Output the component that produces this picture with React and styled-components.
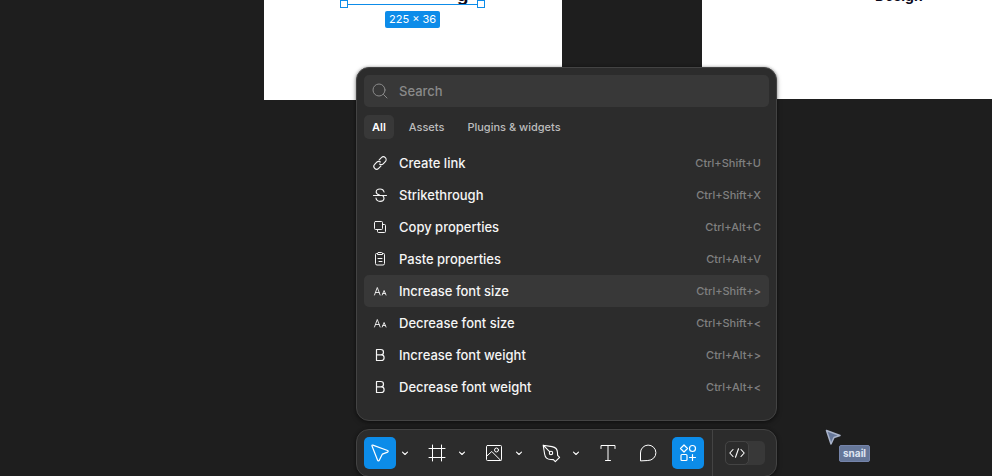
import React from "react";
import styled, { createGlobalStyle, css } from "styled-components";

const Global = createGlobalStyle`
  *, *::before, *::after { box-sizing: border-box; }
  body { margin: 0; background: #1e1e1e; overflow: hidden; }
  button, input { font: inherit; color: inherit; }
`;

const Page = styled.main`
  position: relative;
  height: 100vh;
  overflow: hidden;
  background: #1e1e1e;
  font-family: Inter, "Liberation Sans", sans-serif;
  color: #fff;
`;

const Frame = styled.section`
  position: absolute;
  top: ${(p) => p.$y}px;
  left: ${(p) => p.$x}px;
  width: ${(p) => p.$w}px;
  height: ${(p) => p.$h}px;
  background: #fff;
  color: #0b0a1c;
`;

const FrameText = styled.span`
  position: absolute;
  left: ${(p) => p.$x}px;
  top: ${(p) => p.$y}px;
  font-size: ${(p) => p.$size}px;
  line-height: 20px;
  font-weight: 700;
`;

const Selection = styled.div`
  position: absolute;
  left: 79px;
  top: -17px;
  width: 139px;
  height: 22px;
  border: 1px solid #0d8ce9;
`;

const Handle = styled.i`
  position: absolute;
  bottom: -4px;
  ${(p) => p.$side}: -4px;
  width: 8px;
  height: 8px;
  background: #fff;
  border: 1px solid #0d8ce9;
`;

const SizeTag = styled.span`
  position: absolute;
  left: 121px;
  top: 11px;
  padding: 0 4px;
  border-radius: 2px;
  background: #0d8ce9;
  color: #fff;
  font-size: 11px;
  line-height: 17px;
  white-space: nowrap;
`;

const Dock = styled.div`
  position: relative;
  display: flex;
  flex-direction: column;
  align-items: center;
  gap: 8px;
  padding: 67px 0 0 141px;
`;

const surface = css`
  width: 421px;
  background: #2c2c2c;
  border: 1px solid #434343;
  border-radius: 13px;
  box-shadow: 0 2px 5px rgba(0, 0, 0, 0.35), 0 0 3px rgba(0, 0, 0, 0.3);
`;

const Palette = styled.section`
  ${surface}
  padding: 7px 7px 17px;
`;

const SearchField = styled.label`
  display: flex;
  align-items: center;
  gap: 11px;
  height: 32px;
  padding: 0 8px;
  border-radius: 5px;
  background: #383838;
  color: #8a8a8a;
`;

const SearchInput = styled.input`
  flex: 1;
  min-width: 0;
  padding: 0;
  border: 0;
  outline: 0;
  background: none;
  font-size: 13px;
  font-weight: 450;
  &::placeholder { color: #8a8a8a; opacity: 1; }
`;

const Tabs = styled.div`
  display: flex;
  gap: 7px;
  margin: 8px 0;
`;

const Tab = styled.button`
  height: 24px;
  padding: 0 8px;
  border: 0;
  border-radius: 5px;
  font-size: 11px;
  font-weight: ${(p) => (p.$active ? 600 : 500)};
  background: ${(p) => (p.$active ? "#383838" : "transparent")};
  color: ${(p) => (p.$active ? "#fff" : "#bdbdbd")};
`;

const List = styled.ul`
  list-style: none;
  margin: 0;
  padding: 0;
`;

const Command = styled.button`
  display: flex;
  align-items: center;
  gap: 11px;
  width: 100%;
  height: 32px;
  padding: 0 8px;
  border: 0;
  border-radius: 5px;
  background: ${(p) => (p.$active ? "#383838" : "transparent")};
  color: #f5f5f5;
  font-size: 13px;
  font-weight: 450;
  text-align: left;
`;

const CommandName = styled.span`
  flex: 1;
`;

const Shortcut = styled.kbd`
  font-family: inherit;
  font-size: 11px;
  font-weight: 500;
  color: #808080;
`;

const Toolbar = styled.nav`
  ${surface}
  display: flex;
  height: 48px;
  padding: 0 7px;
  align-items: center;
`;

const Tools = styled.div`
  display: flex;
  align-items: center;
  flex: 1;
  gap: 8px;
`;

const ToolGroup = styled.div`
  display: flex;
`;

const ToolButton = styled.button`
  display: grid;
  place-items: center;
  width: 32px;
  height: 32px;
  padding: 0;
  border: 0;
  border-radius: 5px;
  background: ${(p) => (p.$active ? "#0c8ce9" : "transparent")};
`;

const MenuButton = styled(ToolButton)`
  width: 17px;
`;

const ModeArea = styled.div`
  align-self: stretch;
  display: flex;
  align-items: center;
  padding: 0 4px 0 12px;
  border-left: 1px solid #444;
`;

const ModeSwitch = styled.button`
  display: flex;
  width: 40px;
  height: 24px;
  padding: 0;
  border: 0;
  border-radius: 5px;
  background: #383838;
`;

const ModeThumb = styled.span`
  display: grid;
  place-items: center;
  width: 24px;
  height: 24px;
  border: 1px solid #444;
  border-radius: 5px;
  background: #2c2c2c;
`;

const Collaborator = styled.div`
  position: absolute;
  left: 825px;
  top: 429px;
  width: 46px;
  height: 34px;
`;

const CollaboratorName = styled.span`
  position: absolute;
  left: 14px;
  top: 16px;
  padding: 0 3px;
  border: 1px solid #7584aa;
  border-radius: 2px;
  background: #667799;
  color: #dfe5f2;
  font-size: 10px;
  font-weight: 700;
  line-height: 15px;
`;

const Svg = ({ size = 24, children, ...rest }) => (
  <svg width={size} height={size} viewBox={`0 0 ${size} ${size}`} fill="none" stroke="currentColor"
    strokeLinecap="round" strokeLinejoin="round" aria-hidden="true" {...rest}>
    {children}
  </svg>
);

const SearchIcon = () => (
  <Svg size={16}><circle cx="7" cy="7" r="6" /><path d="m11.5 11.5 3.5 3.5" /></Svg>
);
const LinkIcon = () => (
  <Svg size={16} strokeWidth="1.15">
    <path d="M7.200 4.800 9.400 2.700a2.700 2.700 0 0 1 3.900 3.900L11.200 8.800a2.700 2.700 0 0 1-3.600.2" />
    <path d="M8.800 11.200 6.600 13.300a2.700 2.700 0 0 1-3.900-3.900L4.800 7.200a2.700 2.700 0 0 1 3.600-.2" />
  </Svg>
);
const StrikeIcon = () => (
  <Svg size={16} strokeWidth="1.15">
    <path d="M1.500 8.500h13M12 5c-.4-2-1.900-3-4-3S4.200 3.200 4.200 5c0 1.700 1.300 2.400 3.300 3M4 11c.3 2.200 1.800 3.300 4 3.300s4-1.100 4-3.100c0-1.200-.5-2-1.500-2.700" />
  </Svg>
);
const CopyIcon = () => (
  <Svg size={16}>
    <rect x="2.500" y="2.500" width="8" height="8" rx="1" />
    <path d="M10.500 5.500h2a1 1 0 0 1 1 1v6a1 1 0 0 1-1 1h-6a1 1 0 0 1-1-1v-2" />
  </Svg>
);
const PasteIcon = () => (
  <Svg size={16}>
    <path d="M5.500 2.500H4.500a1 1 0 0 0-1 1v9a1.500 1.500 0 0 0 1.500 1.500h6a1.500 1.500 0 0 0 1.500-1.500v-9a1 1 0 0 0-1-1h-1M6.500 1.500h3a1 1 0 0 1 1 1v1h-5v-1a1 1 0 0 1 1-1ZM6 7.500h4M7 10.500h3" />
  </Svg>
);
const SizeIcon = () => (
  <Svg size={16}>
    <path strokeWidth="0.9" d="m2.500 12 2.800-7.500L8.100 12M3.500 9.500h3.600M10.200 12l1.900-4.500L14 12M10.900 10.500h2.400" />
  </Svg>
);
const BoldIcon = () => (
  <Svg size={16}>
    <path strokeWidth="1.200" d="M4.500 2.500h4.300a2.700 2.700 0 0 1 0 5.400H4.500ZM4.500 7.900h4.800a2.800 2.800 0 0 1 0 5.600H4.500Z" />
  </Svg>
);
const MoveIcon = () => (
  <Svg><path strokeWidth="1.200" d="M4.800 4.100 19.600 9.500c.8.300.8 1.300 0 1.600l-5.200 2-3.100 6.200c-.4.800-1.400.7-1.700-.1L4 5c-.2-.6.200-1.100.8-.9Z" /></Svg>
);
const FrameIcon = () => (
  <Svg><path d="M7.500 4v16M16.500 4v16M4 7.500h16M4 16.500h16" /></Svg>
);
const ImageIcon = () => (
  <Svg>
    <rect x="4.500" y="4.500" width="15" height="15" rx="1" />
    <circle cx="14.500" cy="9" r="2" />
    <path d="m4.800 15 5-4.500 9 9" />
  </Svg>
);
const PenIcon = () => (
  <Svg strokeWidth="1.100">
    <path d="M4.200 4.200 13 5.600c3.300.5 5.400 3 5.500 6.200l.1 2.600 2 1.900-4.300 4.300-1.900-2-2.600-.1c-3.200-.1-5.700-2.200-6.200-5.500L4.200 4.200Zm0 0 6.600 6.600" />
    <circle cx="12" cy="12" r="1.700" />
  </Svg>
);
const TextIcon = () => (
  <Svg><path d="M5 7.500v-3h14v3M12 4.500v15M9.500 19.500h5" /></Svg>
);
const CommentIcon = () => (
  <Svg><path d="M4.500 19.500V12a7.700 7.700 0 1 1 7.700 7.500Z" /></Svg>
);
const ActionsIcon = () => (
  <Svg strokeWidth="1.200">
    <path d="m8 4 3.500 3.500L8 11 4.500 7.500ZM16.500 13.500v6M13.500 16.500h6" />
    <circle cx="16.500" cy="7.500" r="3" />
    <rect x="5" y="13.500" width="6" height="6" rx="1" />
  </Svg>
);
const ChevronIcon = () => (
  <Svg size={8} strokeWidth="1.100"><path d="M1.500 3.200 4 5.500 6.500 3.200" /></Svg>
);
const CodeIcon = () => (
  <Svg size={16} strokeWidth="1.100"><path d="M4 4.500.8 8 4 11.500M12 4.500 15.200 8 12 11.500M9.500 3.800l-3 8.400" /></Svg>
);

const commands = [
  ["Create link", "Ctrl+Shift+U", LinkIcon],
  ["Strikethrough", "Ctrl+Shift+X", StrikeIcon],
  ["Copy properties", "Ctrl+Alt+C", CopyIcon],
  ["Paste properties", "Ctrl+Alt+V", PasteIcon],
  ["Increase font size", "Ctrl+Shift+>", SizeIcon],
  ["Decrease font size", "Ctrl+Shift+<", SizeIcon],
  ["Increase font weight", "Ctrl+Alt+>", BoldIcon],
  ["Decrease font weight", "Ctrl+Alt+<", BoldIcon],
];

const tools = [
  ["Move", MoveIcon, true, true],
  ["Frame", FrameIcon, true],
  ["Image", ImageIcon, true],
  ["Pen", PenIcon, true],
  ["Text", TextIcon],
  ["Comment", CommentIcon],
  ["Actions", ActionsIcon, false, true],
];

export default function App() {
  return (
    <Page>
      <Global />
      <Frame $x={264} $y={0} $w={298} $h={100}>
        <FrameText $x={193} $y={-15} $size={18}>g</FrameText>
        <Selection><Handle $side="left" /><Handle $side="right" /></Selection>
        <SizeTag>225 × 36</SizeTag>
      </Frame>
      <Frame $x={702} $y={0} $w={290} $h={99}>
        <FrameText $x={173} $y={-14} $size={14}>Design</FrameText>
      </Frame>
      <Dock>
        <Palette aria-label="Actions">
          <SearchField>
            <SearchIcon />
            <SearchInput type="text" placeholder="Search" aria-label="Search" />
          </SearchField>
          <Tabs role="tablist">
            {["All", "Assets", "Plugins & widgets"].map((t, i) => (
              <Tab key={t} role="tab" aria-selected={i === 0} $active={i === 0}>{t}</Tab>
            ))}
          </Tabs>
          <List>
            {commands.map(([name, keys, Icon], i) => (
              <li key={name}>
                <Command $active={i === 4}>
                  <Icon />
                  <CommandName>{name}</CommandName>
                  <Shortcut>{keys}</Shortcut>
                </Command>
              </li>
            ))}
          </List>
        </Palette>
        <Toolbar aria-label="Tools">
          <Tools>
            {tools.map(([name, Icon, menu, active]) => (
              <ToolGroup key={name}>
                <ToolButton aria-label={name} $active={active}><Icon /></ToolButton>
                {menu && <MenuButton aria-label={`${name} options`}><ChevronIcon /></MenuButton>}
              </ToolGroup>
            ))}
          </Tools>
          <ModeArea>
            <ModeSwitch role="switch" aria-checked="false" aria-label="Dev Mode">
              <ModeThumb><CodeIcon /></ModeThumb>
            </ModeSwitch>
          </ModeArea>
        </Toolbar>
      </Dock>
      <Collaborator>
        <Svg size={18}><path d="M1.500 1.500 15 6.500 9 8.500 6 15Z" fill="#667799" stroke="#a9b3c9" strokeWidth="1.500" /></Svg>
        <CollaboratorName>snail</CollaboratorName>
      </Collaborator>
    </Page>
  );
}
